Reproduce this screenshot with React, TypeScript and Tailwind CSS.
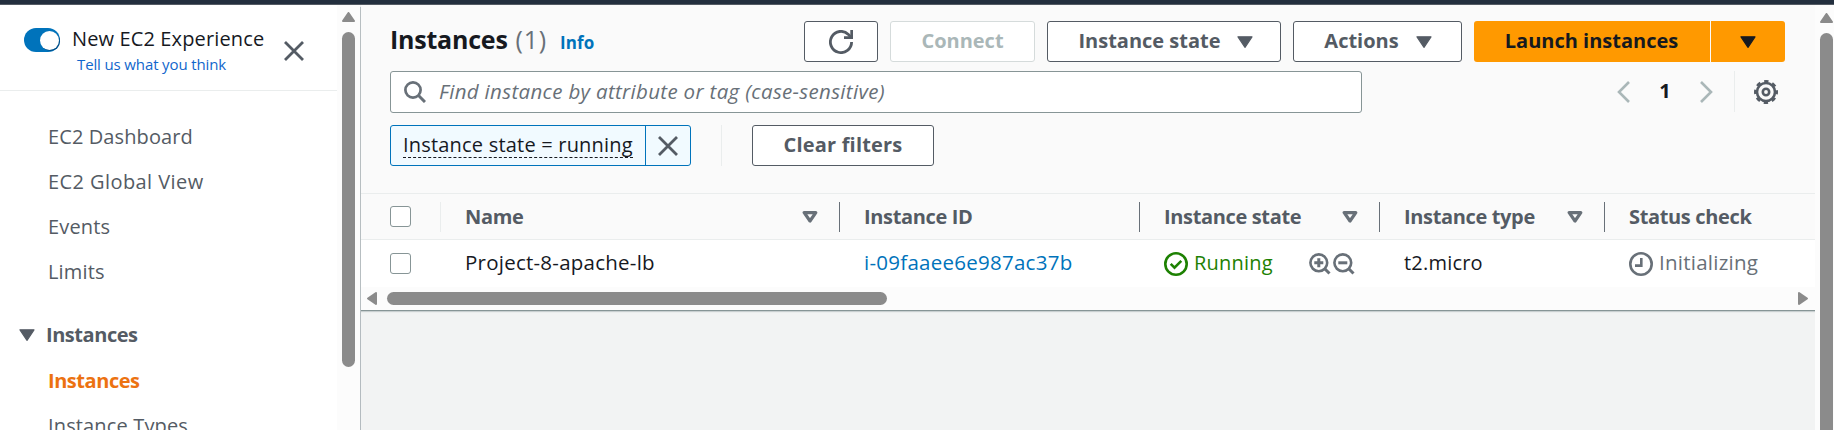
import React from "react";

function Caret({ className = "" }: { className?: string }) {
  return (
    <svg className={`h-3 w-4 shrink-0 ${className}`} viewBox="0 0 16 12" fill="currentColor" stroke="currentColor">
      <path d="M1 .8h14L8 11.3z" strokeWidth="1.2" strokeLinejoin="round" />
    </svg>
  );
}

function SortCaret() {
  return (
    <svg className="h-3 w-4 shrink-0 text-[#687078]" viewBox="0 0 16 12" fill="none" stroke="currentColor">
      <path d="M2.2 1.6h11.6L8 10z" strokeWidth="3.2" strokeLinejoin="round" />
    </svg>
  );
}

function Close() {
  return (
    <svg className="h-5 w-5 shrink-0 text-[#545b64]" viewBox="0 0 20 20" fill="none" stroke="currentColor">
      <path d="M1 1l18 18M19 1L1 19" strokeWidth="2.8" />
    </svg>
  );
}

function Arrow({ d, className = "" }: { d: string; className?: string }) {
  return (
    <svg className={`shrink-0 text-[#8b8b8b] ${className}`} fill="currentColor" stroke="currentColor">
      <path d={d} strokeWidth="2" strokeLinejoin="round" />
    </svg>
  );
}

function Magnifier({ plus }: { plus: boolean }) {
  return (
    <svg className="h-[22px] w-[22px] shrink-0 text-[#687078]" viewBox="0 0 22 22" fill="none" stroke="currentColor">
      <circle cx="9.8" cy="9.8" r="8.4" strokeWidth="2.6" />
      <path d="M15.5 15.5l5 5" strokeWidth="3" />
      <path d={plus ? "M5.3 9.8h9M9.8 5.3v9" : "M5.3 9.8h9"} strokeWidth="3" />
    </svg>
  );
}

function Checkbox() {
  return <span className="block h-[21px] w-[21px] rounded-[3px] border border-[#879596] bg-white" />;
}

function NavItem({ label, className = "text-[#545b64]" }: { label: string; className?: string }) {
  return <a className={`flex h-[45px] items-center pl-[48px] text-[20px] ${className}`}>{label}</a>;
}

const button = "flex h-[41px] shrink-0 items-center justify-center rounded-[3px] border border-[#545b64] bg-white pb-0.5 text-[20px] font-bold text-[#545b64]";
const columns = "grid grid-cols-[75px_399px_300px_240px_225px_1fr] items-center";

function Sidebar() {
  return (
    <aside className="flex w-[360px] shrink-0 bg-white">
      <div className="w-[337px] shrink-0">
        <div className="flex h-[86px] items-start border-b border-[#eaeded]">
          <span className="ml-6 mt-[23px] flex h-6 w-9 shrink-0 items-center justify-end rounded-full bg-[#0073bb] pr-[1.5px]">
            <span className="h-[19px] w-[19px] rounded-full bg-white shadow-[1px_1px_0_#00508a]" />
          </span>
          <div className="ml-3 mt-[18px] w-[212px]">
            <div className="h-[31px] whitespace-nowrap text-[20px] leading-[31px] tracking-[0.13px] text-[#16191f]">New EC2 Experience</div>
            <div className="h-5 whitespace-nowrap pl-[5px] text-[15px] leading-5 tracking-[-0.13px] text-[#1166cc]">Tell us what you think</div>
          </div>
          <span className="mt-9"><Close /></span>
        </div>
        <nav className="pt-[23px]">
          <NavItem label="EC2 Dashboard" className="tracking-[0.1px] text-[#545b64]" />
          <NavItem label="EC2 Global View" className="tracking-[0.42px] text-[#545b64]" />
          <NavItem label="Events" className="tracking-[0.15px] text-[#545b64]" />
          <NavItem label="Limits" className="tracking-[0.15px] text-[#545b64]" />
          <div className="mt-[18px] flex h-[46px] items-center pl-[19px] text-[20px] font-bold tracking-[-0.45px] text-[#545b64]">
            <Caret />
            <span className="ml-[11px]">Instances</span>
          </div>
          <NavItem label="Instances" className="font-bold tracking-[-0.45px] text-[#ec7211]" />
          <NavItem label="Instance Types" className="tracking-[0.15px] text-[#545b64]" />
        </nav>
      </div>
      <div className="flex w-[23px] shrink-0 flex-col items-center bg-[#fcfcfc] pt-[7px]">
        <Arrow className="h-[10px] w-[15px]" d="M2 9L7.5 1L13 9z" />
        <span className="mt-[10px] h-[335px] w-[13px] rounded-full bg-[#8b8b8b]" />
      </div>
    </aside>
  );
}

function Toolbar() {
  return (
    <div className="flex h-[57px] items-start pl-[29px] pt-4">
      <div className="flex h-[41px] w-[414px] items-baseline leading-[36px]">
        <h1 className="text-[25px] font-bold tracking-[-0.22px] text-[#16191f]">Instances</h1>
        <span className="ml-2 text-[25px] tracking-[0.8px] text-[#687078]">(1)</span>
        <a className="ml-[13px] text-[17px] font-bold tracking-[0.1px] text-[#0073bb]">Info</a>
      </div>
      <button className={`${button} w-[74px]`}>
        <svg className="mt-0.5 h-6 w-6" viewBox="0 0 24 24" fill="none" stroke="currentColor">
          <path d="M22.6 12A10.6 10.6 0 1 1 19.4 4.4L22 7.4" strokeWidth="2.8" />
          <path d="M22.7 0v7.6H15" strokeWidth="2.8" />
        </svg>
      </button>
      <button className="ml-3 flex h-[41px] w-[145px] items-center justify-center rounded-[3px] border border-[#d5dbdb] bg-white pb-0.5 text-[20px] font-bold text-[#aab7b8]">Connect</button>
      <button className={`${button} ml-3 w-[234px] pl-[3px]`}><span>Instance state</span><Caret className="ml-4 mt-0.5" /></button>
      <button className={`${button} ml-3 w-[169px] pl-[1px]`}><span>Actions</span><Caret className="ml-[17px] mt-0.5" /></button>
      <button className="ml-3 flex h-[41px] w-[236px] items-center justify-center rounded-l-[3px] bg-[#ff9900] pb-0.5 pr-px text-[20px] font-bold text-[#16191f]">Launch instances</button>
      <button className="ml-px flex h-[41px] w-[74px] items-center justify-center rounded-r-[3px] bg-[#ff9900] text-[#16191f]"><Caret /></button>
    </div>
  );
}

function SearchRow() {
  return (
    <div className="mt-[9px] flex h-[42px] pl-[29px]">
      <div className="flex w-[972px] items-center rounded-[3px] border border-[#879596] bg-white pl-[13px]">
        <svg className="h-[22px] w-[22px]" viewBox="0 0 22 22" fill="none" stroke="#687078">
          <circle cx="9" cy="9" r="7.6" strokeWidth="2.7" />
          <path d="M14.3 14.3l6.7 6.7" strokeWidth="3" />
        </svg>
        <span className="ml-[13px] whitespace-nowrap pb-0.5 text-[20.5px] italic tracking-[0.33px] text-[#687078]">Find instance by attribute or tag (case-sensitive)</span>
      </div>
      <div className="ml-[255px] flex h-[41px] items-center">
        <svg className="h-[22px] w-[13px]" viewBox="0 0 13 22" fill="none" stroke="#aab7b8"><path d="M12 1L2 11l10 10" strokeWidth="2.6" /></svg>
        <span className="w-[70px] pb-px text-center text-[20px] font-bold leading-none text-[#16191f]">1</span>
        <svg className="h-[22px] w-[13px]" viewBox="0 0 13 22" fill="none" stroke="#aab7b8"><path d="M1 1l10 10L1 21" strokeWidth="2.6" /></svg>
        <span className="ml-[21px] h-[41px] w-px bg-[#eaeded]" />
        <svg className="ml-[19px] h-6 w-6" viewBox="0 0 24 24" fill="none" stroke="#545b64">
          <circle cx="12" cy="12" r="9" strokeWidth="2.6" />
          <circle cx="12" cy="12" r="10.8" strokeWidth="2.4" strokeDasharray="4.4 4.082" strokeDashoffset="2.2" />
          <circle cx="12" cy="12" r="3.2" strokeWidth="2.6" />
        </svg>
      </div>
    </div>
  );
}

function FilterRow() {
  return (
    <div className="mt-3 flex h-[41px] pl-[29px]">
      <div className="flex w-[301px] rounded-[3px] border border-[#0073bb] bg-[#f1faff]">
        <div className="flex w-[255px] items-start border-r border-[#0073bb] pl-3 pt-1">
          <span className="h-[28px] w-[230px] whitespace-nowrap border-b border-dashed border-[#16191f] text-[20px] leading-[30px] tracking-[0.2px] text-[#16191f]">Instance state = running</span>
        </div>
        <div className="flex flex-1 items-center justify-center"><Close /></div>
      </div>
      <span className="ml-[30px] h-[41px] w-px bg-[#eaeded]" />
      <button className={`${button} ml-[30px] w-[182px] tracking-[0.18px]`}>Clear filters</button>
    </div>
  );
}

function HeadCell({ label, sort = true, last = false }: { label: string; sort?: boolean; last?: boolean }) {
  return (
    <div className="flex h-[30px] items-center">
      <span className="whitespace-nowrap">{label}</span>
      <span className="flex-1" />
      {sort && <SortCaret />}
      {!last && <span className="ml-[21px] mr-6 h-[30px] w-px bg-[#687078]" />}
    </div>
  );
}

function Table() {
  return (
    <div>
      <div className="border-y border-[#eaeded]">
        <div className={`${columns} h-[45px] pl-[29px] text-[20px] font-bold tracking-[-0.35px] text-[#545b64]`}>
          <div className="flex h-[30px] items-center"><Checkbox /><span className="ml-[29px] h-[30px] w-px bg-[#eaeded]" /></div>
          <HeadCell label="Name" />
          <HeadCell label="Instance ID" sort={false} />
          <HeadCell label="Instance state" />
          <HeadCell label="Instance type" />
          <HeadCell label="Status check" sort={false} last />
        </div>
      </div>
      <div className={`${columns} h-[47px] bg-white pl-[29px] text-[20px] text-[#16191f]`}>
        <Checkbox />
        <span className="pb-0.5 text-[20.5px] tracking-[0.24px]">Project-8-apache-lb</span>
        <a className="pb-0.5 text-[20.5px] tracking-[0.26px] text-[#0073bb]">i-09faaee6e987ac37b</a>
        <div className="flex items-center">
          <span className="flex w-[145px] items-center text-[#1d8102]">
            <svg className="mr-[6px] h-6 w-6" viewBox="0 0 24 24" fill="none" stroke="currentColor">
              <circle cx="12" cy="12" r="10.7" strokeWidth="2.6" />
              <path d="M6.7 11.8l3.8 3.8 6.8-6.8" strokeWidth="2.6" />
            </svg>
            <span className="pb-0.5 tracking-[0.2px]">Running</span>
          </span>
          <span className="flex gap-[2px]"><Magnifier plus /><Magnifier plus={false} /></span>
        </div>
        <span className="pb-0.5 tracking-[0.2px]">t2.micro</span>
        <span className="flex items-center text-[#687078]">
          <svg className="mr-[6px] h-6 w-6" viewBox="0 0 24 24" fill="none" stroke="currentColor">
            <circle cx="12" cy="12" r="10.7" strokeWidth="2.6" />
            <path d="M12.3 6v7.6H6" strokeWidth="2.6" />
          </svg>
          <span className="pb-0.5 text-[20.5px] tracking-[0.25px]">Initializing</span>
        </span>
      </div>
      <div className="flex h-[23px] items-center bg-[#fcfcfc] pl-[5px] pr-[6px]">
        <Arrow className="h-[15px] w-[11px]" d="M10 2L2 7.5L10 13z" />
        <span className="ml-[10px] h-[13px] w-[500px] rounded-full bg-[#8b8b8b]" />
        <span className="flex-1" />
        <Arrow className="h-[15px] w-[11px]" d="M1 2L9 7.5L1 13z" />
      </div>
    </div>
  );
}

export default function App() {
  return (
    <div className="flex h-[430px] w-[1834px] flex-col overflow-hidden bg-[#f2f3f3] font-['Open_Sans',sans-serif]">
      <header className="h-[5px] shrink-0 border-b border-[#545b64] bg-[#232f3e]" />
      <div className="flex min-h-0 flex-1">
        <Sidebar />
        <main className="flex w-[1455px] shrink-0">
          <span className="mt-[2px] w-px shrink-0 bg-[#b4bbbf]" />
          <section className="h-[306px] w-[1454px] border-b border-[#879596] bg-[#fafafa] shadow-[0_1px_1px_#c9cfd0]">
            <Toolbar />
            <SearchRow />
            <FilterRow />
            <div className="h-[27px]" />
            <Table />
          </section>
        </main>
        <div className="flex w-[19px] shrink-0 flex-col items-end bg-[#fcfcfc] pr-px pt-2">
          <Arrow className="-mr-px h-[10px] w-[15px]" d="M2 9L7.5 1L13 9z" />
          <span className="mt-[10px] h-[420px] w-[13px] shrink-0 rounded-t-full bg-[#8b8b8b]" />
        </div>
      </div>
    </div>
  );
}
